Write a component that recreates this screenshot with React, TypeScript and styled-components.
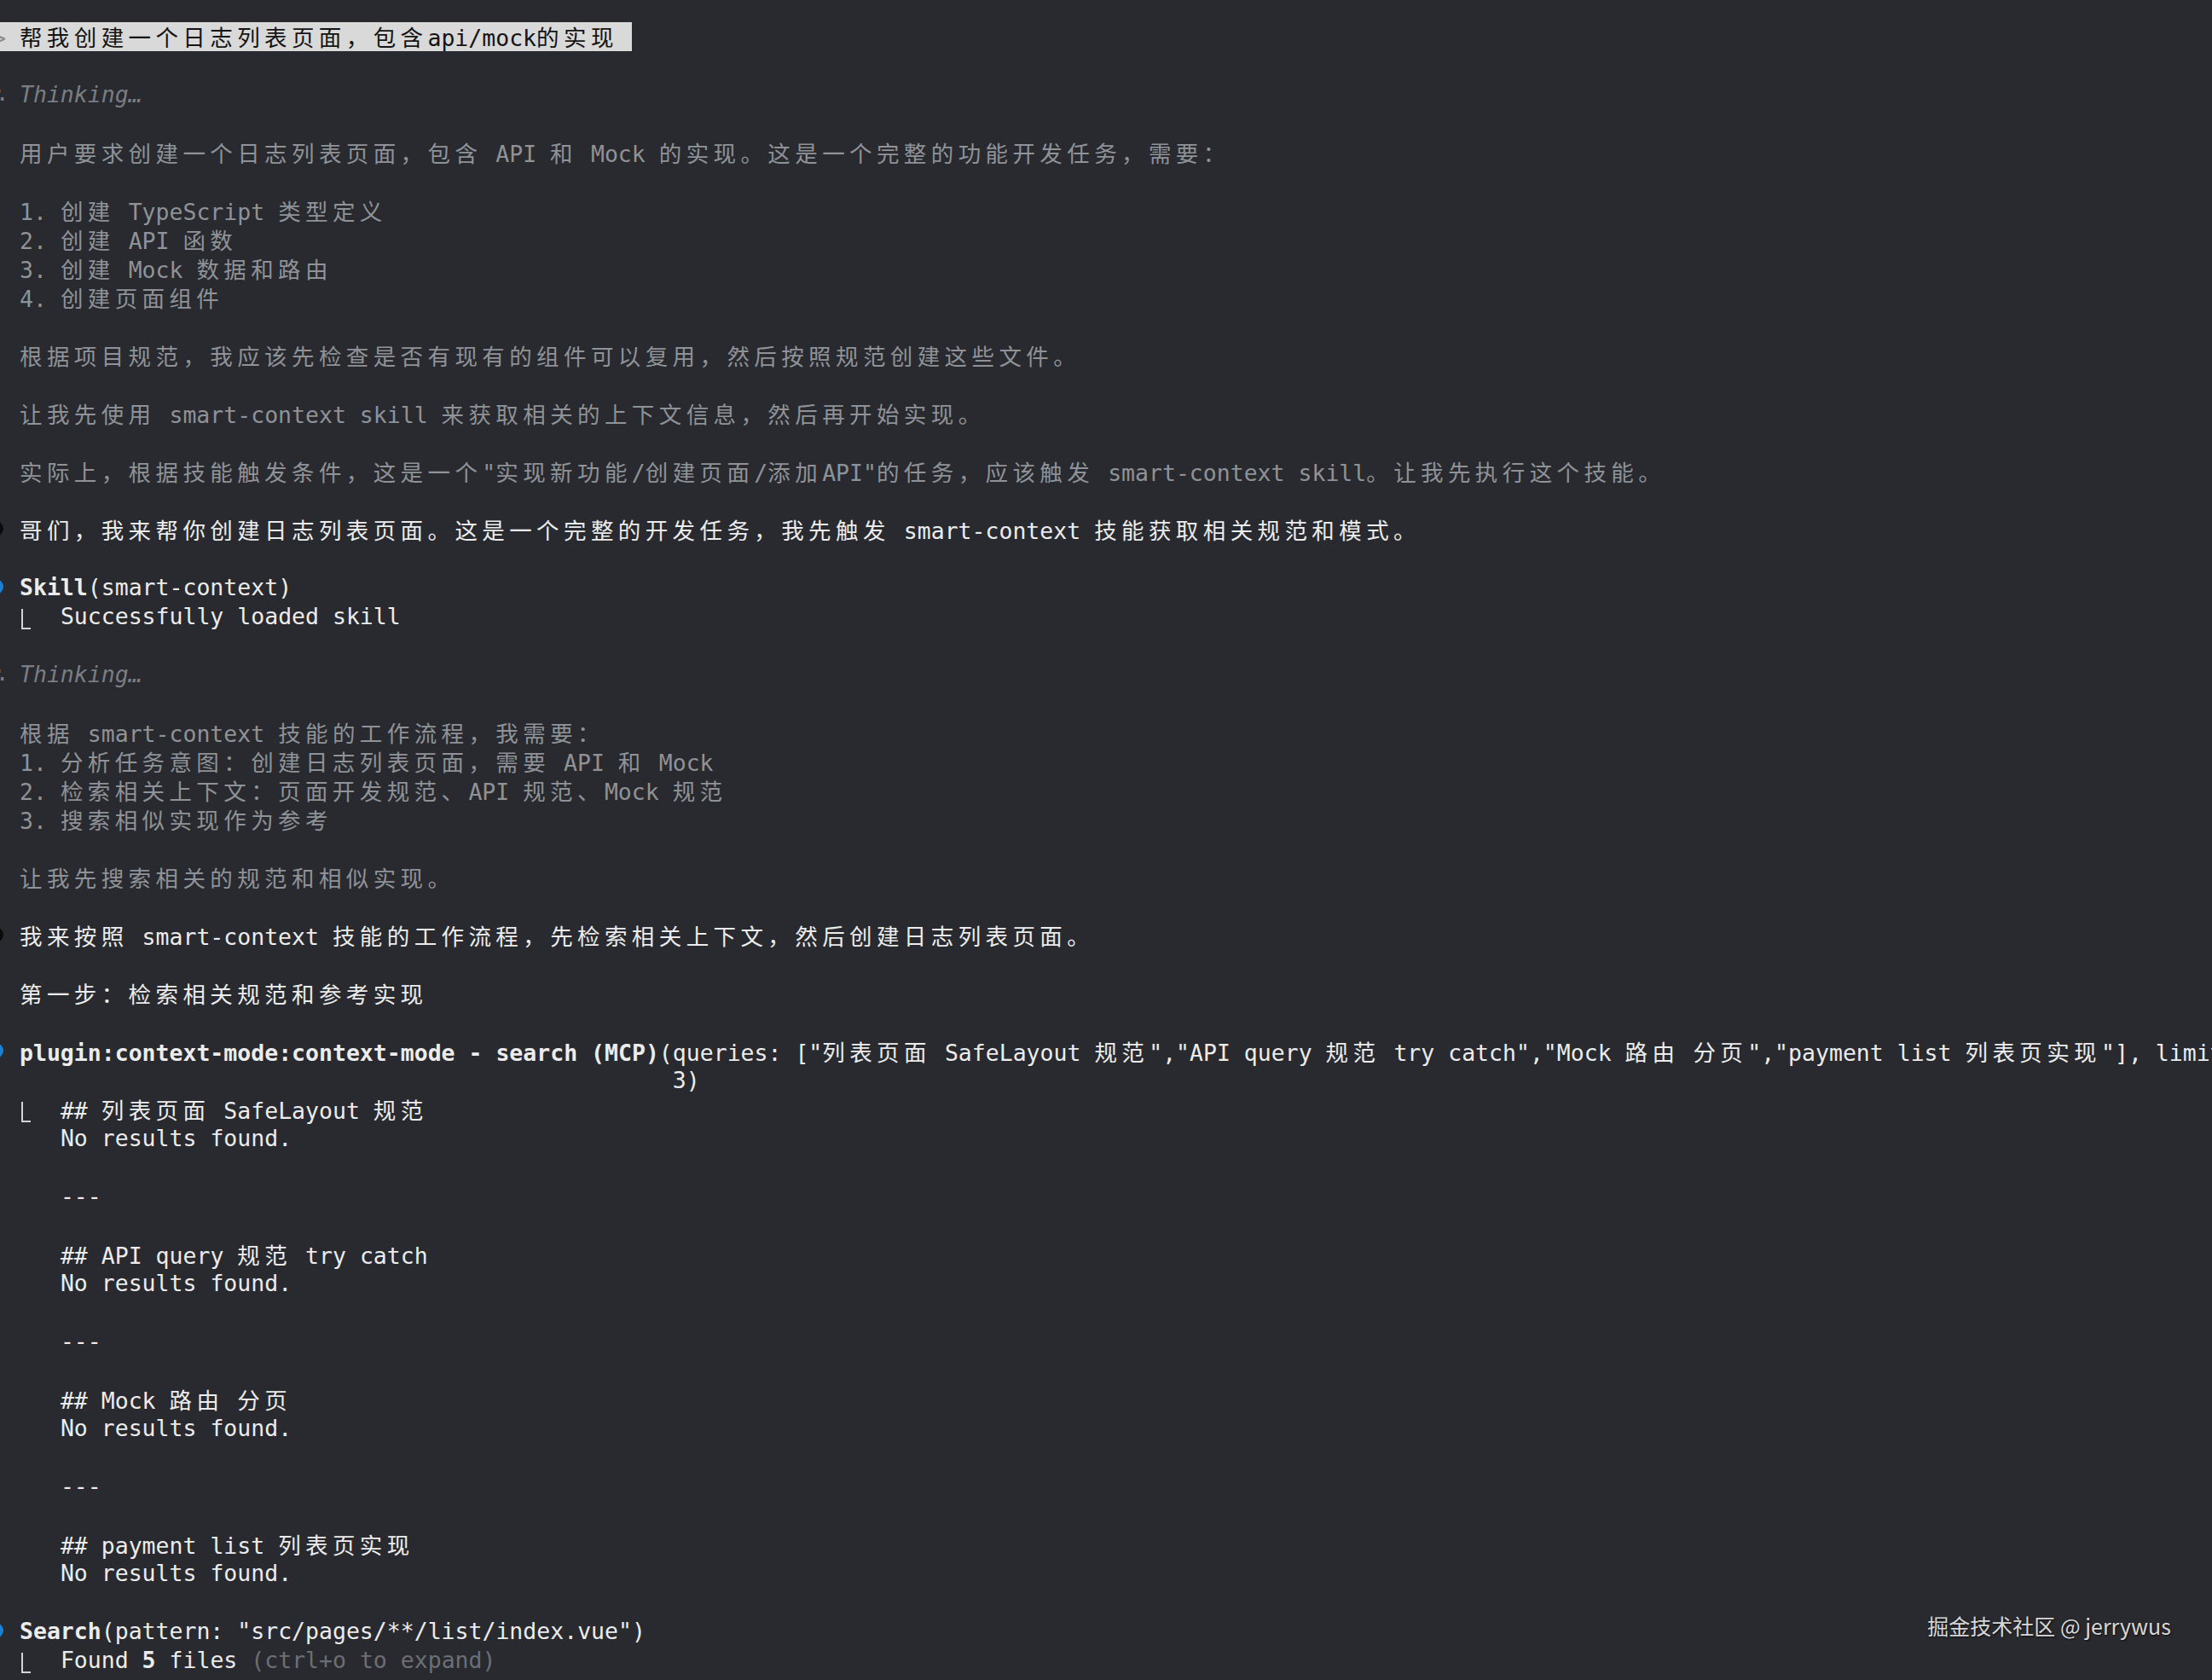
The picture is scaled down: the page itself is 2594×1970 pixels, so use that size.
import React from 'react';
import styled, { createGlobalStyle } from 'styled-components';

type Tone = 'text' | 'thought';

const toneColors: Record<Tone, string> = {
  text: '#ececec',
  thought: '#8f9297',
};

// runs of CJK / fullwidth chars take two terminal cells each
const CJK_RUN = /([\u2e80-\u9fff\u3000-\u303f\uff00-\uffef]+)/;

const Txt: React.FC<{ s: string }> = ({ s }) => (
  <>
    {s.split(CJK_RUN).map((part, i) =>
      i % 2 === 1 ? <Wide key={i}>{part}</Wide> : part
    )}
  </>
);

const Blank = () => <Line />;

const Bullet: React.FC<{ color: string; children: React.ReactNode; tone?: Tone }> = ({
  color,
  children,
  tone = 'text',
}) => (
  <Line $tone={tone}>
    <Gutter>
      <Dot $color={color} />
    </Gutter>
    <span>{children}</span>
  </Line>
);

const Plain: React.FC<{ s: string; tone?: Tone }> = ({ s, tone = 'text' }) => (
  <Line $tone={tone}>
    <Gutter />
    <span>
      <Txt s={s} />
    </span>
  </Line>
);

const Thinking = () => (
  <Line $tone="thought">
    <Gutter>
      <Therefore>∴</Therefore>
    </Gutter>
    <Label>Thinking…</Label>
  </Line>
);

const Result: React.FC<{ children: React.ReactNode; first?: boolean }> = ({
  children,
  first,
}) => (
  <Line>
    <Gutter />
    <span>
      {first ? <Elbow /> : ' '}
      {'  '}
      {children}
    </span>
  </Line>
);

const App: React.FC = () => {
  const queries =
    '(queries: ["列表页面 SafeLayout 规范","API query 规范 try catch","Mock 路由 分页","payment list 列表页实现"], limit: ';

  return (
    <Page>
      <GlobalStyle />
      <Terminal>
        <Line>
          <Prompt>
            <PromptMark>&gt;</PromptMark> <Txt s="帮我创建一个日志列表页面，包含api/mock的实现" />{' '}
          </Prompt>
        </Line>
        <Blank />
        <Thinking />
        <Blank />
        <Plain tone="thought" s="用户要求创建一个日志列表页面，包含 API 和 Mock 的实现。这是一个完整的功能开发任务，需要：" />
        <Blank />
        <Plain tone="thought" s="1. 创建 TypeScript 类型定义" />
        <Plain tone="thought" s="2. 创建 API 函数" />
        <Plain tone="thought" s="3. 创建 Mock 数据和路由" />
        <Plain tone="thought" s="4. 创建页面组件" />
        <Blank />
        <Plain tone="thought" s="根据项目规范，我应该先检查是否有现有的组件可以复用，然后按照规范创建这些文件。" />
        <Blank />
        <Plain tone="thought" s="让我先使用 smart-context skill 来获取相关的上下文信息，然后再开始实现。" />
        <Blank />
        <Plain
          tone="thought"
          s={'实际上，根据技能触发条件，这是一个"实现新功能/创建页面/添加API"的任务，应该触发 smart-context skill。让我先执行这个技能。'}
        />
        <Blank />
        <Bullet color="#0b0b0c">
          <Txt s="哥们，我来帮你创建日志列表页面。这是一个完整的开发任务，我先触发 smart-context 技能获取相关规范和模式。" />
        </Bullet>
        <Blank />
        <Bullet color="#1d7fd0">
          <Strong>Skill</Strong>(smart-context)
        </Bullet>
        <Result first>Successfully loaded skill</Result>
        <Blank />
        <Thinking />
        <Blank />
        <Plain tone="thought" s="根据 smart-context 技能的工作流程，我需要：" />
        <Plain tone="thought" s="1. 分析任务意图：创建日志列表页面，需要 API 和 Mock" />
        <Plain tone="thought" s="2. 检索相关上下文：页面开发规范、API 规范、Mock 规范" />
        <Plain tone="thought" s="3. 搜索相似实现作为参考" />
        <Blank />
        <Plain tone="thought" s="让我先搜索相关的规范和相似实现。" />
        <Blank />
        <Bullet color="#0b0b0c">
          <Txt s="我来按照 smart-context 技能的工作流程，先检索相关上下文，然后创建日志列表页面。" />
        </Bullet>
        <Blank />
        <Plain s="第一步：检索相关规范和参考实现" />
        <Blank />
        <Bullet color="#1d7fd0">
          <Strong>plugin:context-mode:context-mode - search (MCP)</Strong>
          <Txt s={queries} />
        </Bullet>
        <Plain s={' '.repeat(48) + '3)'} />
        <Result first>
          <Txt s="## 列表页面 SafeLayout 规范" />
        </Result>
        <Result>No results found.</Result>
        <Blank />
        <Result>---</Result>
        <Blank />
        <Result>
          <Txt s="## API query 规范 try catch" />
        </Result>
        <Result>No results found.</Result>
        <Blank />
        <Result>---</Result>
        <Blank />
        <Result>
          <Txt s="## Mock 路由 分页" />
        </Result>
        <Result>No results found.</Result>
        <Blank />
        <Result>---</Result>
        <Blank />
        <Result>
          <Txt s="## payment list 列表页实现" />
        </Result>
        <Result>No results found.</Result>
        <Blank />
        <Bullet color="#1d7fd0">
          <Strong>Search</Strong>(pattern: "src/pages/**/list/index.vue")
        </Bullet>
        <Result first>
          Found <Strong>5</Strong> files <Hint>(ctrl+o to expand)</Hint>
        </Result>
      </Terminal>
      <Watermark>掘金技术社区 @ jerrywus</Watermark>
    </Page>
  );
};

const GlobalStyle = createGlobalStyle`
  html, body {
    margin: 0;
    padding: 0;
    background: #282a2f;
  }
  body {
    overflow: hidden;
  }
`;

const Page = styled.div`
  position: relative;
  height: 100vh;
  overflow: hidden;
  background: #282a2f;
  font-family: 'DejaVu Sans Mono', 'Liberation Mono', 'Noto Sans CJK SC', monospace;
  font-size: 26.5px;
`;

const Terminal = styled.div`
  display: flex;
  flex-direction: column;
  padding-top: 26px;
  margin-left: -9px;
`;

const Line = styled.div<{ $tone?: Tone }>`
  display: flex;
  height: 34px;
  line-height: 34px;
  white-space: pre;
  color: ${(p) => toneColors[p.$tone ?? 'text']};
`;

const Gutter = styled.span`
  flex: none;
  width: 32px;
  display: flex;
  align-items: center;
`;

const Dot = styled.span<{ $color: string }>`
  width: 18px;
  height: 18px;
  margin-left: -5px;
  margin-top: -2px;
  border-radius: 50%;
  background: ${(p) => p.$color};
`;

const Therefore = styled.span`
  color: #7c7f85;
`;

const Label = styled.span`
  font-style: italic;
  color: #7a7d83;
`;

const Wide = styled.span`
  font-family: 'Noto Sans CJK SC', sans-serif;
  letter-spacing: 5.4px;
`;

const Strong = styled.span`
  font-weight: 700;
`;

const Hint = styled.span`
  color: #6c6f75;
`;

const Prompt = styled.span`
  background: #d9d9d9;
  color: #141414;
`;

const PromptMark = styled.span`
  color: #8a8a8a;
`;

const Elbow = styled.span`
  position: relative;
  display: inline-block;
  width: 1ch;
  height: 34px;
  vertical-align: top;

  &::before {
    content: '';
    position: absolute;
    left: 2px;
    top: 8px;
    width: 9px;
    height: 22px;
    border-left: 2px solid #d4d4d4;
    border-bottom: 2px solid #d4d4d4;
  }
`;

const Watermark = styled.div`
  position: absolute;
  right: 48px;
  bottom: 51px;
  font-family: 'Noto Sans CJK SC', 'Noto Sans', sans-serif;
  font-size: 25px;
  line-height: 1;
  color: #d8d8d8;
  text-shadow: 1px 1px 2px rgba(0, 0, 0, 0.7);
`;

export default App;
